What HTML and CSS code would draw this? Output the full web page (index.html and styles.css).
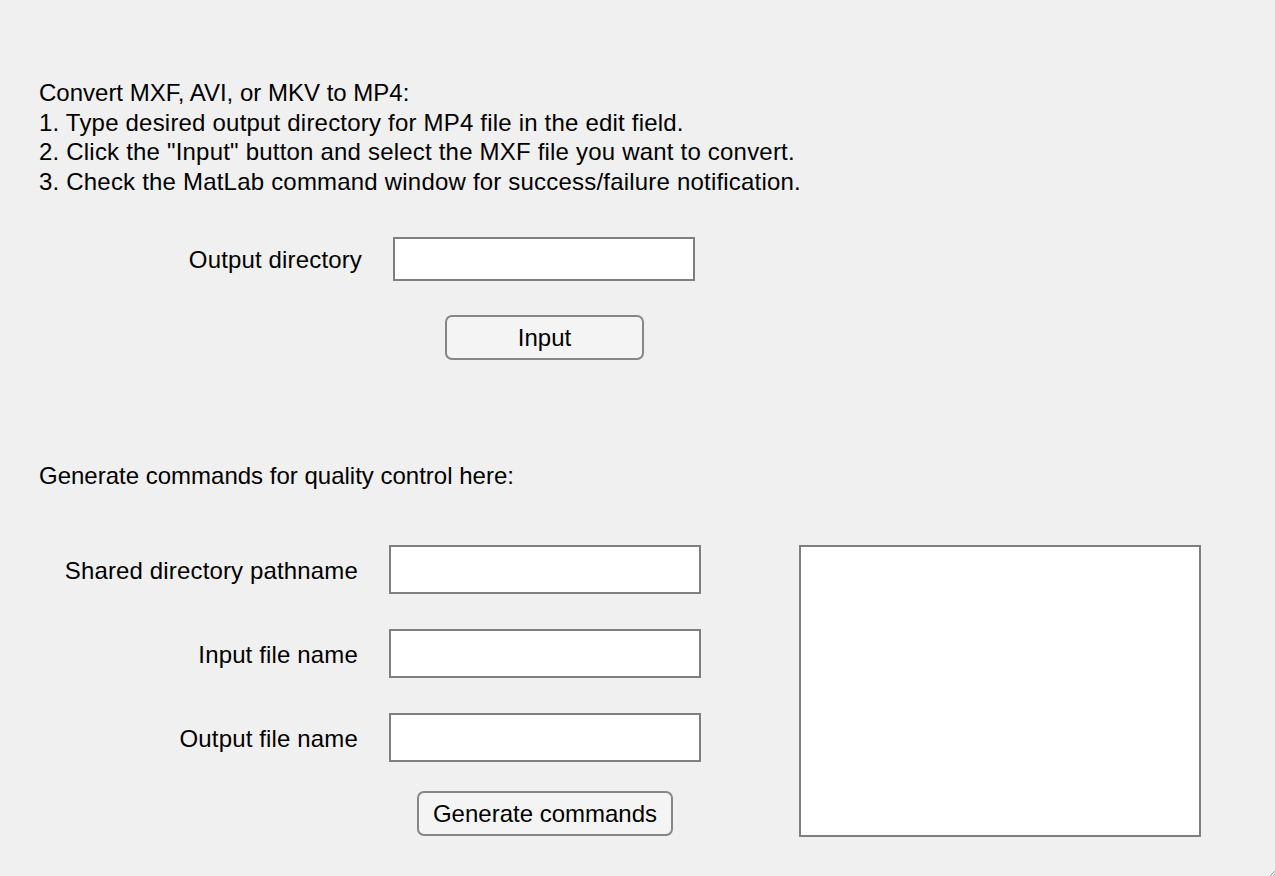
FILE: index.html
```html
<!DOCTYPE html>
<html lang="en">
<head>
<meta charset="utf-8">
<title>MXF to MP4 Converter</title>
<link rel="stylesheet" href="styles.css">
</head>
<body>
<div class="app">
  <div class="instructions">
    <div>Convert MXF, AVI, or MKV to MP4:</div>
    <div class="wide">1. Type desired output directory for MP4 file in the edit field.</div>
    <div class="wide">2. Click the "Input" button and select the MXF file you want to convert.</div>
    <div class="wide">3. Check the MatLab command window for success/failure notification.</div>
  </div>

  <div class="row row-top">
    <label class="label label-top">Output directory</label>
    <div class="field field-top"></div>
  </div>
  <button class="btn btn-input">Input</button>

  <div class="heading">Generate commands for quality control here:</div>

  <div class="lower">
    <div class="form">
      <div class="row row-low">
        <label class="label label-low">Shared directory pathname</label>
        <div class="field field-low"></div>
      </div>
      <div class="row row-low">
        <label class="label label-low">Input file name</label>
        <div class="field field-low"></div>
      </div>
      <div class="row row-low">
        <label class="label label-low">Output file name</label>
        <div class="field field-low"></div>
      </div>
      <button class="btn btn-generate">Generate commands</button>
    </div>
    <div class="textarea"></div>
  </div>
</div>
<svg class="grip" width="6" height="6" viewBox="0 0 6 6"><path d="M6 1 L1 6 M6 4 L4 6" stroke="#9a9a9a" stroke-width="1"/></svg>
</body>
</html>
```
FILE: styles.css
```css
html, body {
  margin: 0;
  padding: 0;
  height: 100%;
  background: #f0f0f0;
}
body {
  font-family: "Liberation Sans", Arial, Helvetica, sans-serif;
  font-size: 24px;
  color: #000;
  overflow: hidden;
  position: relative;
}
.app {
  padding: 78px 0 0 39px;
}
.instructions {
  line-height: 29.67px;
}
.instructions .wide {
  letter-spacing: 0.2px;
}
.row {
  display: flex;
  align-items: center;
}
.label {
  text-align: right;
  line-height: 30px;
  flex: none;
  position: relative;
  letter-spacing: 0.15px;
}
.field {
  background: #fff;
  border: 2px solid #7f7f7f;
  box-sizing: border-box;
  flex: none;
}
.row-top {
  margin-top: 40px;
}
.label-top {
  width: 323px;
  margin-right: 31px;
  top: 1px;
}
.field-top {
  width: 302px;
  height: 44px;
}
.btn {
  display: block;
  font-family: inherit;
  font-size: 24px;
  color: #000;
  background: #f4f4f4;
  border: 2px solid #868686;
  border-radius: 7px;
  box-sizing: border-box;
  height: 45px;
  padding: 0;
  line-height: 41px;
  text-align: center;
}
.btn-input {
  margin: 34px 0 0 406px;
  width: 199px;
}
.heading {
  margin-top: 101px;
  line-height: 30px;
}
.lower {
  display: flex;
  align-items: flex-start;
  margin-top: 54px;
}
.form {
  display: flex;
  flex-direction: column;
  gap: 35px;
}
.label-low {
  width: 319px;
  margin-right: 31px;
  top: 2px;
}
.field-low {
  width: 312px;
  height: 49px;
}
.btn-generate {
  margin: -6px 0 0 378px;
  width: 256px;
}
.textarea {
  margin-left: 98px;
  width: 402px;
  height: 292px;
  background: #fff;
  border: 2px solid #7f7f7f;
  box-sizing: border-box;
}
.grip {
  position: absolute;
  right: 0;
  bottom: 0;
}
```
